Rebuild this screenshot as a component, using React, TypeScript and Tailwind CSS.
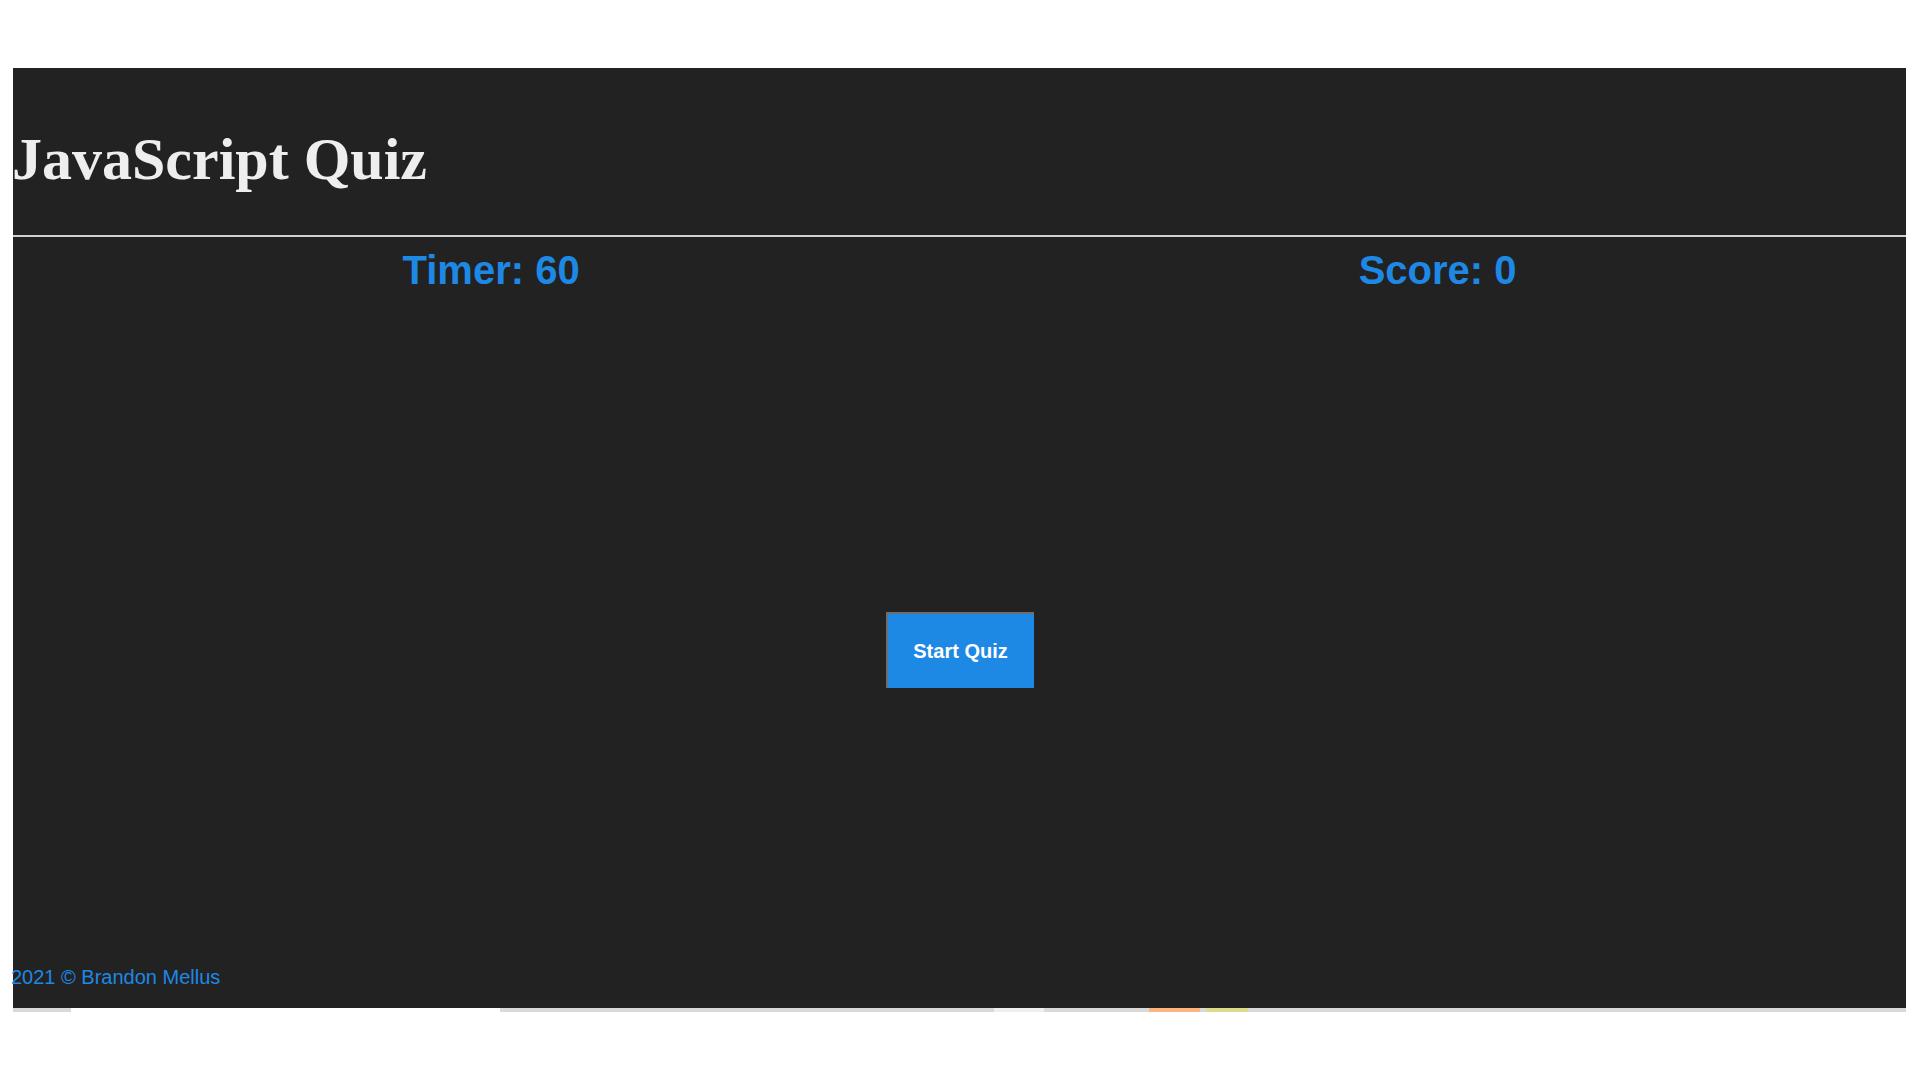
const strip = [
  { w: "w-[58px]", c: "bg-[#d9d9d9]" },
  { w: "w-[429px]", c: "bg-white" },
  { w: "w-[494px]", c: "bg-[#d9d9d9]" },
  { w: "w-[50px]", c: "bg-[#efefef]" },
  { w: "w-[105px]", c: "bg-[#d9d9d9]" },
  { w: "w-[51px]", c: "bg-[#fdb47d]" },
  { w: "w-[6px]", c: "bg-[#d9d9d9]" },
  { w: "w-[42px]", c: "bg-[#dcdc8a]" },
  { w: "flex-1", c: "bg-[#d9d9d9]" },
];

export default function App() {
  return (
    <div className="min-h-screen bg-white pt-[68px]">
      <div className="ml-[13px] flex h-[940px] w-[1893px] flex-col bg-[#222222]">
        <h1 className="-ml-[1px] pt-[57px] font-['Liberation_Serif',serif] text-[60px] font-bold leading-[69px] text-[#eeeeee]">
          JavaScript Quiz
        </h1>
        <div className="mt-[41px] h-[2px] bg-[#d0d0d0]" />
        <div className="mt-[10px] flex justify-around font-['Liberation_Sans',Arial,sans-serif] text-[40px] font-bold leading-[46px] text-[#1e88e5]">
          <span>Timer: 60</span>
          <span>Score: 0</span>
        </div>
        <button
          type="button"
          className="mt-[319px] h-[76px] w-[148px] self-center border-t-2 border-l-2 border-[#6e6e6e] bg-[#1e88e5] font-['Liberation_Sans',Arial,sans-serif] text-[20px] font-bold text-white"
        >
          Start Quiz
        </button>
        <div className="flex-1" />
        <footer className="-ml-[2px] pb-[19px] font-['Liberation_Sans',Arial,sans-serif] text-[20px] leading-[23px] text-[#1e88e5]">
          2021 © Brandon Mellus
        </footer>
      </div>
      <div className="ml-[13px] flex h-[4px] w-[1893px]">
        {strip.map((s, i) => (
          <div key={i} className={`${s.w} ${s.c}`} />
        ))}
      </div>
    </div>
  );
}
